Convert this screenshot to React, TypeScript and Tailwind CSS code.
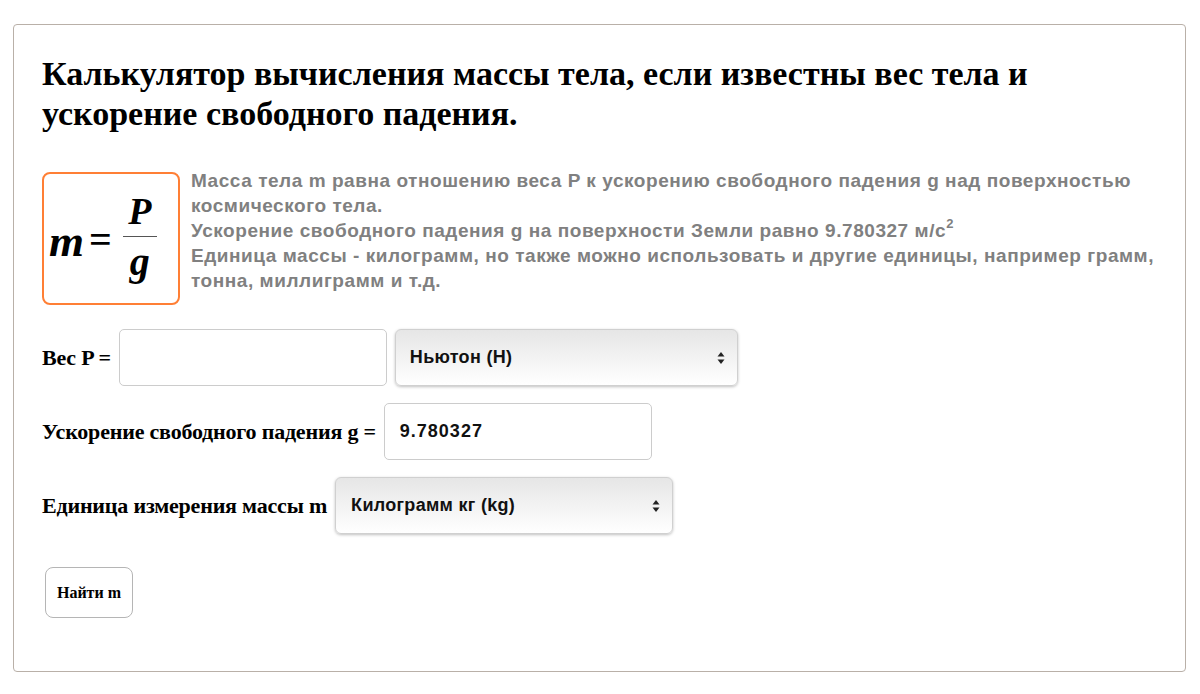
import React from "react";

const serif = { fontFamily: '"Liberation Serif", "Times New Roman", serif' };
const sans = { fontFamily: '"Liberation Sans", Arial, sans-serif' };

function Arrows() {
  return (
    <svg width="8" height="14" viewBox="0 0 8 14" className="shrink-0">
      <path d="M4 1 L7.5 5.5 L0.5 5.5 Z" fill="#222" />
      <path d="M4 13 L7.5 8.5 L0.5 8.5 Z" fill="#222" />
    </svg>
  );
}

function FakeSelect({ value, width, pl }: { value: string; width: string; pl: string }) {
  return (
    <div
      className={`${width} ${pl} h-[57px] flex items-center justify-between pr-[12px] rounded-[6px] border border-[#d0d0d0] bg-gradient-to-b from-[#e6e6e6] to-[#ffffff] shadow-[0_1px_3px_rgba(0,0,0,0.25)] text-[18px] tracking-[0.3px] font-bold text-[#111]`}
      style={sans}
    >
      <span>{value}</span>
      <Arrows />
    </div>
  );
}

export default function App() {
  return (
    <div className="bg-white w-[1200px] h-[694px] pt-[24px] pl-[13px]">
      <div className="w-[1173px] h-[648px] border border-[#b9b0a8] rounded-[4px] pl-[28px] pr-[10px] pt-[29px]">
        <h1 className="text-[34px] leading-[40px] font-bold text-black" style={serif}>
          Калькулятор вычисления массы тела, если известны вес тела и
          <br />
          ускорение свободного падения.
        </h1>

        <div className="flex items-start mt-[38px]">
          <div className="w-[138px] h-[133px] shrink-0 rounded-[8px] border-2 border-[#ff7f35] flex items-center pl-[5px]" style={serif}>
            <span className="text-[45px] font-bold italic leading-none mt-[6px]">m</span>
            <span className="text-[40px] font-bold leading-none ml-[5px] mt-[2px]">=</span>
            <div className="flex flex-col items-center ml-[11px]">
              <span className="text-[38px] font-bold italic leading-[40px] mt-[-4px]">P</span>
              <div className="w-[34px] h-[1.5px] bg-[#555] my-[5px]"></div>
              <span className="text-[40px] font-bold italic leading-[40px]">g</span>
            </div>
          </div>
          <div className="ml-[11px] mt-[-4px] text-[19px] tracking-[0.55px] leading-[25px] font-bold text-[#808080]" style={sans}>
            Масса тела m равна отношению веса P к ускорению свободного падения g над поверхностью
            <br />
            космического тела.
            <br />
            Ускорение свободного падения g на поверхности Земли равно 9.780327 м/с<sup className="text-[13px] relative -top-[9px]">2</sup>
            <br />
            Единица массы - килограмм, но также можно использовать и другие единицы, например грамм,
            <br />
            тонна, миллиграмм и т.д.
          </div>
        </div>

        <div className="flex items-center mt-[24px]">
          <span className="text-[22px] font-bold text-black tracking-[-0.2px]" style={serif}>Вес P =</span>
          <div className="w-[268px] h-[57px] ml-[8px] rounded-[5px] border border-[#cccccc] bg-white"></div>
          <div className="ml-[8px]">
            <FakeSelect value="Ньютон (Н)" width="w-[343px]" pl="pl-[14px]" />
          </div>
        </div>

        <div className="flex items-center mt-[17px]">
          <span className="text-[22px] font-bold text-black tracking-[-0.2px]" style={serif}>Ускорение свободного падения g =</span>
          <div className="w-[268px] h-[57px] ml-[8px] rounded-[5px] border border-[#cccccc] bg-white flex items-center pl-[15px] text-[18px] tracking-[1px] font-bold text-[#111]" style={sans}>
            9.780327
          </div>
        </div>

        <div className="flex items-center mt-[17px]">
          <span className="text-[22px] font-bold text-black tracking-[-0.2px]" style={serif}>Единица измерения массы m</span>
          <div className="ml-[8px]">
            <FakeSelect value="Килограмм кг (kg)" width="w-[338px]" pl="pl-[15px]" />
          </div>
        </div>

        <button
          className="mt-[33px] ml-[3px] w-[88px] h-[51px] rounded-[8px] border border-[#b5b5b5] bg-white text-[16px] font-bold text-black"
          style={serif}
        >
          Найти m
        </button>
      </div>
    </div>
  );
}
